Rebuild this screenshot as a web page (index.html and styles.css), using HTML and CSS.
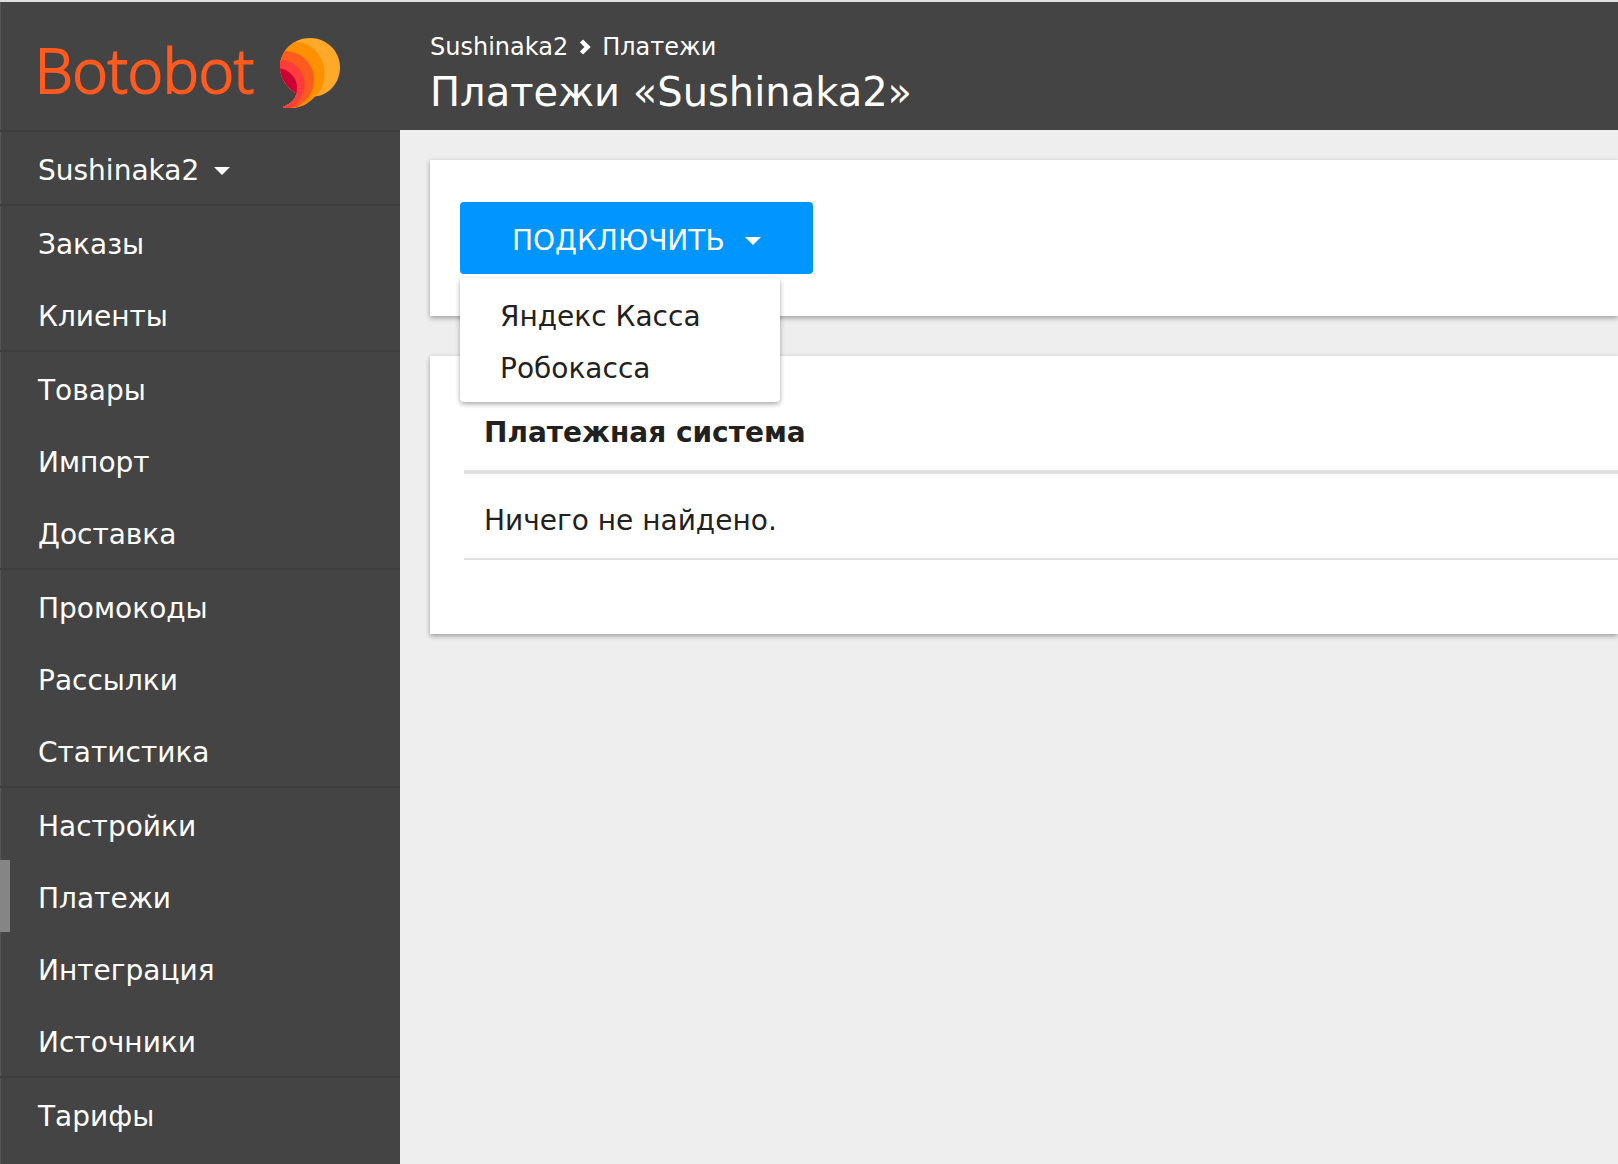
FILE: index.html
```html
<!DOCTYPE html>
<html lang="ru">
<head>
<meta charset="utf-8">
<title>Платежи «Sushinaka2»</title>
<link rel="stylesheet" href="styles.css">
</head>
<body>
<aside class="sidebar">
  <a class="logo" href="#">
    <span class="logo-name">Botobot</span>
    <svg class="logo-mark" viewBox="0 0 60 70" aria-hidden="true">
      <defs>
        <clipPath id="bubble"><path d="M30 0C46.500 0 60 13 60 29C60 44 50 57 35 58.500C29 65 21 70 11 70H3V68.500C10 67 15.500 61 16.500 55.500C7 50 0 40 0 29C0 13 13.500 0 30 0Z"/></clipPath>
      </defs>
      <g clip-path="url(#bubble)">
        <rect width="60" height="70" fill="#ffa92b"/>
        <path d="M-2 4H18C34 6 44.500 20 44.500 36C44.500 47 40 54 35 58.500L22 70C18 72 14 72 10 72H-2Z" fill="#ff9100"/>
        <path d="M-2 13C18 11 34 23 34 42C34 55 26 64 14 71H-2Z" fill="#ff5a1f"/>
        <path d="M-2 22C13 21 24 32 24.500 46C24.500 57 18 66 9 71L-2 74Z" fill="#ff3b3b"/>
        <path d="M-2 30C9 31 17 40 17 49L16.500 56L-2 56Z" fill="#cc0033"/>
      </g>
    </svg>
  </a>
  <nav class="menu">
    <ul class="menu-group">
      <li><button class="menu-item" type="button">Sushinaka2 <span class="caret"></span></button></li>
    </ul>
    <ul class="menu-group">
      <li><a class="menu-item" href="#">Заказы</a></li>
      <li><a class="menu-item" href="#">Клиенты</a></li>
    </ul>
    <ul class="menu-group">
      <li><a class="menu-item" href="#">Товары</a></li>
      <li><a class="menu-item" href="#">Импорт</a></li>
      <li><a class="menu-item" href="#">Доставка</a></li>
    </ul>
    <ul class="menu-group">
      <li><a class="menu-item" href="#">Промокоды</a></li>
      <li><a class="menu-item" href="#">Рассылки</a></li>
      <li><a class="menu-item" href="#">Статистика</a></li>
    </ul>
    <ul class="menu-group">
      <li><a class="menu-item" href="#">Настройки</a></li>
      <li><a class="menu-item active" href="#" aria-current="page">Платежи</a></li>
      <li><a class="menu-item" href="#">Интеграция</a></li>
      <li><a class="menu-item" href="#">Источники</a></li>
    </ul>
    <ul class="menu-group">
      <li><a class="menu-item" href="#">Тарифы</a></li>
    </ul>
  </nav>
</aside>
<div class="page">
  <header class="header">
    <nav class="crumbs">
      <a href="#">Sushinaka2</a>
      <svg class="chevron" viewBox="0 0 12 16" aria-hidden="true"><path d="M2.500 2L8.500 8L2.500 14" fill="none" stroke="#fff" stroke-width="4.500"/></svg>
      <a href="#">Платежи</a>
    </nav>
    <h1 class="title">Платежи «Sushinaka2»</h1>
  </header>
  <main class="content">
    <section class="card actions">
      <div class="dropdown">
        <button class="connect" type="button" aria-expanded="true">ПОДКЛЮЧИТЬ <span class="caret"></span></button>
        <ul class="dropdown-menu">
          <li><a href="#">Яндекс Касса</a></li>
          <li><a href="#">Робокасса</a></li>
        </ul>
      </div>
    </section>
    <section class="card list">
      <table class="table">
        <thead><tr><th>Платежная система</th></tr></thead>
        <tbody><tr><td>Ничего не найдено.</td></tr></tbody>
      </table>
    </section>
  </main>
</div>
</body>
</html>
```
FILE: styles.css
```css
* { box-sizing: border-box; }
body {
  margin: 0;
  min-height: 100vh;
  display: flex;
  border-top: 2px solid #dfe0e2;
  background: #eee;
  color: #212121;
  font: 28px/36px Verdana, "DejaVu Sans", sans-serif;
}
a { color: inherit; text-decoration: none; }
ul { list-style: none; margin: 0; padding: 0; }
button { border: 0; font: inherit; color: inherit; cursor: pointer; }

.sidebar {
  flex: 0 0 400px;
  background: #444;
  color: #fff;
  box-shadow: inset 1px 0 #555;
}
.logo {
  height: 128px;
  padding: 14px 60px 0 35px;
  display: flex;
  align-items: center;
  justify-content: space-between;
}
.logo-name {
  padding-bottom: 6px;
  font: 300 60px/72px "Open Sans", sans-serif;
  color: #ff5a1f;
  -webkit-text-stroke: 2px #ff5a1f;
}
.logo-mark { width: 60px; height: 70px; }
.menu-group { border-top: 2px solid #3d3d3d; }
.menu-item {
  display: flex;
  align-items: center;
  gap: 15px;
  width: 100%;
  height: 72px;
  padding: 6px 38px 0;
  background: none;
}
.menu-item.active { box-shadow: inset 10px 0 #858585; }
.caret {
  border: 8px solid transparent;
  border-top-color: currentColor;
  border-bottom: 0;
}

.page { flex: 1; min-width: 0; overflow: hidden; }
.header {
  height: 128px;
  padding: 29px 30px 0;
  background: #444;
  color: #fff;
}
.crumbs {
  display: flex;
  align-items: center;
  gap: 11px;
  font-size: 24px;
  line-height: 32px;
}
.chevron { width: 12px; height: 16px; }
.title {
  margin: 5px 0 0;
  font-size: 40px;
  line-height: 48px;
  font-weight: 400;
}

.content { padding: 30px 0 30px 30px; }
.card {
  margin-bottom: 40px;
  background: #fff;
  box-shadow: 0 2px 5px rgba(0, 0, 0, .35);
}
.actions { padding: 42px 30px; }
.dropdown { position: relative; display: inline-flex; }
.connect {
  display: flex;
  align-items: center;
  gap: 20px;
  height: 72px;
  padding: 6px 52px 0;
  border-radius: 4px;
  background: #0095ff;
  color: #fff;
}
.dropdown-menu {
  position: absolute;
  top: 76px;
  left: 0;
  width: 320px;
  padding: 10px 0;
  border-radius: 4px;
  background: #fff;
  box-shadow: 0 2px 5px rgba(0, 0, 0, .35);
}
.dropdown-menu a { display: block; padding: 11px 40px 5px; }
.list { padding: 46px 0 74px 34px; }
.table { width: 100%; border-collapse: collapse; text-align: left; }
.table th { padding: 13px 20px 19px; border-bottom: 4px solid #e0e0e0; }
.table td { padding: 29px 20px 19px; border-bottom: 2px solid #e0e0e0; }
```
